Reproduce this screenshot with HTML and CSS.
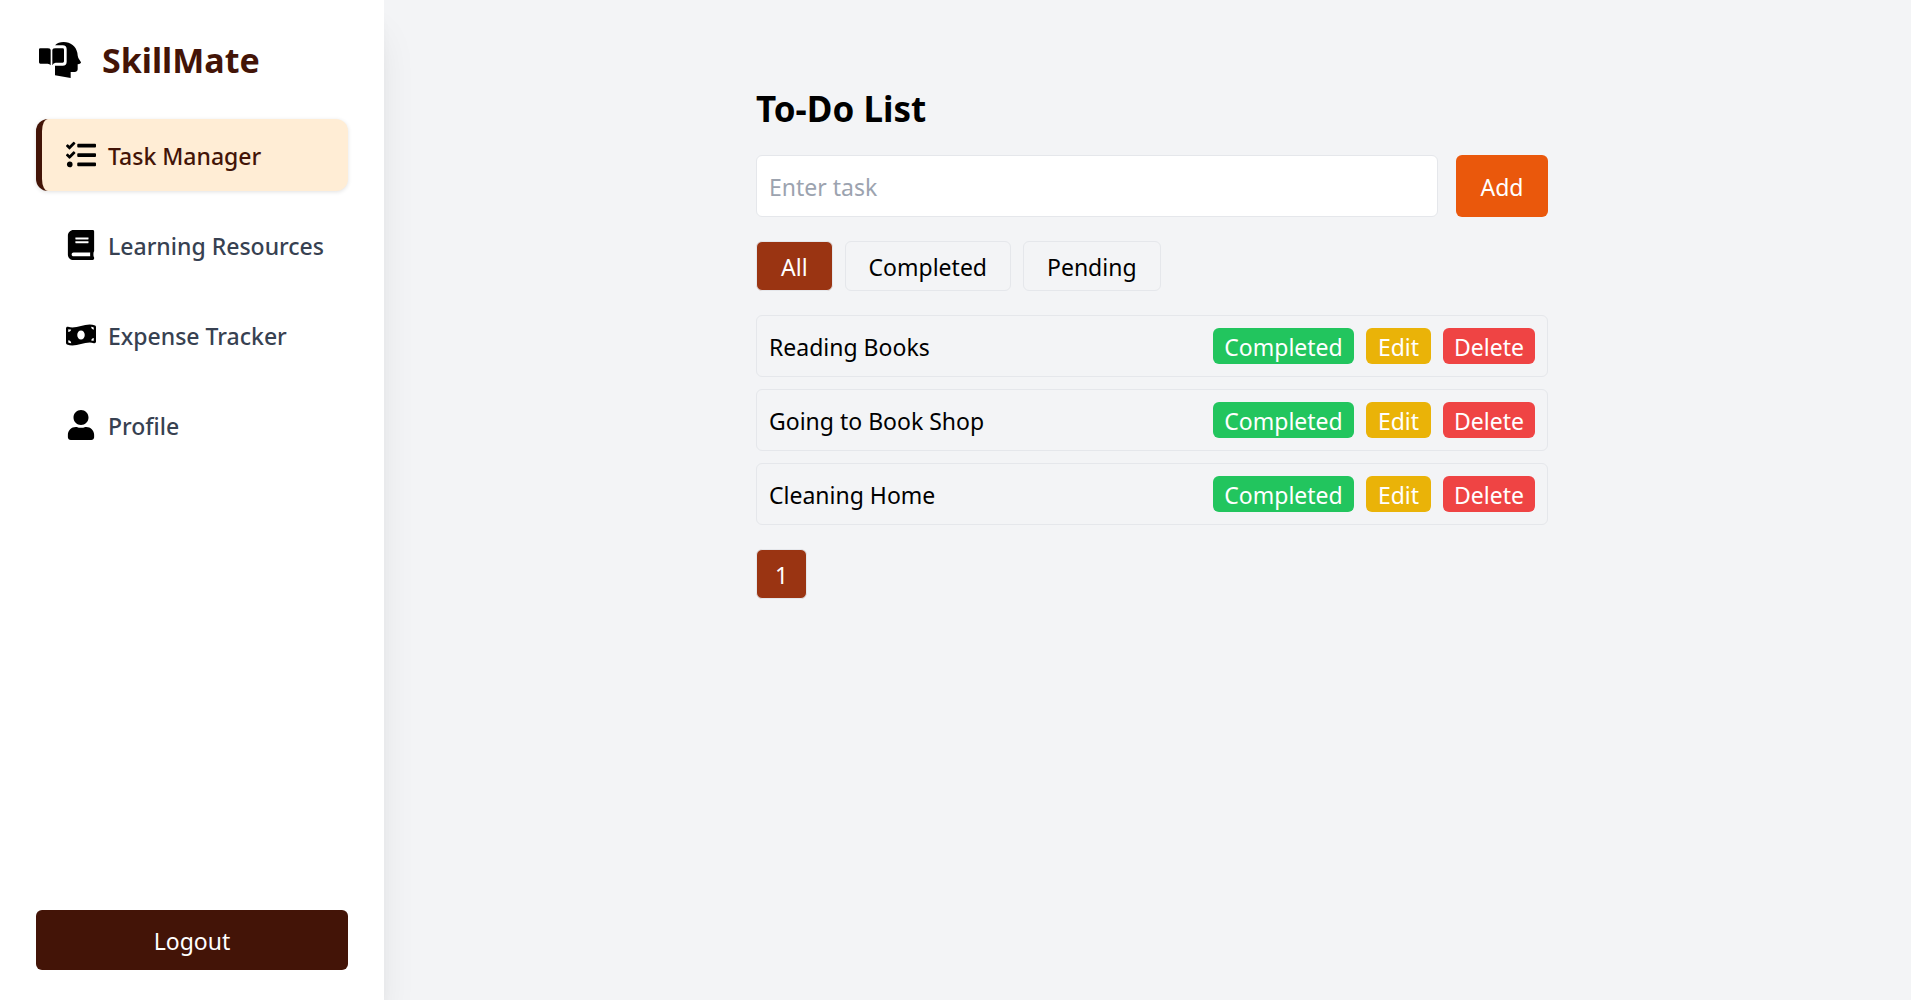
FILE: index.html
```html
<!DOCTYPE html>
<html lang="en">
<head>
  <meta charset="utf-8">
  <meta name="viewport" content="width=device-width, initial-scale=1">
  <title>SkillMate</title>
  <link rel="stylesheet" href="styles.css">
</head>
<body>
  <div class="app">
    <aside class="sidebar">
      <div class="brand">
        <svg class="brand-icon" viewBox="0 0 126 108" aria-hidden="true">
          <path d="M0 22Q0 19 4 19H26Q33 19 35 23V70Q32 65 26 65H4Q0 65 0 61Z"/>
          <path d="M40 23Q42 19 49 19H71Q75 19 75 23V58Q75 62 71 62H50Q43 62 40 70Z"/>
          <path d="M48 10Q58 0 74 0C95 0 111 13 115 32Q116 43 118 48L126 61Q126 66 116 67V82Q115 90 107 90H95V108L48 100V71H71Q83 71 83 59V22Q83 10 71 10Z"/>
        </svg>
        <span class="brand-name">SkillMate</span>
      </div>
      <nav class="nav">
        <a class="nav-link active" href="#tasks" aria-current="page">
          <svg class="nav-icon" viewBox="0 0 512 512" aria-hidden="true"><path d="M139.61 35.5a12 12 0 0 0-17 0L58.93 98.81l-22.7-22.12a12 12 0 0 0-17 0L3.53 92.41a12 12 0 0 0 0 17l47.59 47.4a12.78 12.78 0 0 0 17.61 0l15.59-15.62L156.52 69a12.09 12.09 0 0 0 .09-17zm0 159.19a12 12 0 0 0-17 0l-63.68 63.72-22.7-22.1a12 12 0 0 0-17 0L3.53 252a12 12 0 0 0 0 17L51 316.5a12.77 12.77 0 0 0 17.6 0l15.7-15.69 72.2-72.22a12 12 0 0 0 .09-16.9zM64 368c-26.49 0-48.59 21.5-48.59 48S37.53 464 64 464a48 48 0 0 0 0-96zm432 16H208a16 16 0 0 0-16 16v32a16 16 0 0 0 16 16h288a16 16 0 0 0 16-16v-32a16 16 0 0 0-16-16zm0-320H208a16 16 0 0 0-16 16v32a16 16 0 0 0 16 16h288a16 16 0 0 0 16-16V80a16 16 0 0 0-16-16zm0 160H208a16 16 0 0 0-16 16v32a16 16 0 0 0 16 16h288a16 16 0 0 0 16-16v-32a16 16 0 0 0-16-16z"/></svg>
          <span class="nav-label">Task Manager</span>
        </a>
        <a class="nav-link" href="#resources">
          <svg class="nav-icon" viewBox="0 0 448 512" aria-hidden="true"><path d="M448 360V24c0-13.3-10.7-24-24-24H96C43 0 0 43 0 96v320c0 53 43 96 96 96h328c13.3 0 24-10.7 24-24v-16c0-7.5-3.5-14.3-8.9-18.7-4.2-15.4-4.2-59.3 0-74.7 5.4-4.3 8.9-11.1 8.9-18.6zM128 134c0-3.3 2.7-6 6-6h212c3.3 0 6 2.7 6 6v20c0 3.3-2.7 6-6 6H134c-3.3 0-6-2.7-6-6v-20zm0 64c0-3.3 2.7-6 6-6h212c3.3 0 6 2.7 6 6v20c0 3.3-2.7 6-6 6H134c-3.3 0-6-2.7-6-6v-20zm253.4 250H96c-17.7 0-32-14.3-32-32 0-17.6 14.4-32 32-32h285.4c-1.9 17.1-1.9 46.9 0 64z"/></svg>
          <span class="nav-label">Learning Resources</span>
        </a>
        <a class="nav-link" href="#expenses">
          <svg class="nav-icon" viewBox="0 0 640 512" aria-hidden="true"><path d="M621.16 54.46C582.37 38.19 543.55 32 504.75 32c-123.17-.01-246.33 62.34-369.5 62.34-30.89 0-61.76-3.92-92.65-13.72-3.47-1.1-6.95-1.62-10.35-1.62C15.04 79 0 92.32 0 110.81v317.26c0 12.63 7.23 24.6 18.84 29.46C57.63 473.81 96.45 480 135.25 480c123.17 0 246.34-62.35 369.51-62.35 30.89 0 61.76 3.92 92.65 13.72 3.47 1.1 6.95 1.62 10.35 1.62 17.21 0 32.25-13.32 32.25-31.81V83.93c-.01-12.64-7.24-24.6-18.85-29.47zM48 132.22c20.12 5.04 41.12 7.57 62.72 8.93C104.84 170.54 79 192.69 48 192.69v-60.47zm0 285v-47.78c34.37 0 62.18 27.27 63.71 61.4-22.53-1.81-43.59-6.31-63.71-13.62zM320 352c-44.19 0-80-42.99-80-96 0-53.02 35.82-96 80-96s80 42.98 80 96c0 53.03-35.83 96-80 96zm272 27.78c-17.52-4.39-35.71-6.85-54.32-8.44 5.87-26.08 27.5-45.88 54.32-49.28v57.72zm0-236.11c-30.89-3.91-54.86-29.7-55.81-61.55 19.54 2.17 38.09 6.23 55.81 13.66v47.89z"/></svg>
          <span class="nav-label">Expense Tracker</span>
        </a>
        <a class="nav-link" href="#profile">
          <svg class="nav-icon" viewBox="0 0 448 512" aria-hidden="true"><path d="M224 256c70.7 0 128-57.3 128-128S294.7 0 224 0 96 57.3 96 128s57.3 128 128 128zm89.6 32h-16.7c-22.2 10.2-46.9 16-72.9 16s-50.6-5.8-72.9-16h-16.7C60.2 288 0 348.2 0 422.4V464c0 26.5 21.5 48 48 48h352c26.5 0 48-21.5 48-48v-41.6c0-74.2-60.2-134.4-134.4-134.4z"/></svg>
          <span class="nav-label">Profile</span>
        </a>
      </nav>
      <button class="logout" type="button">Logout</button>
    </aside>

    <main class="main">
      <section class="todo">
        <h1 class="title">To-Do List</h1>
        <form class="add-form">
          <input class="task-input" type="text" placeholder="Enter task" aria-label="Enter task">
          <button class="add" type="button">Add</button>
        </form>
        <div class="filters">
          <button class="chip selected" type="button">All</button>
          <button class="chip" type="button">Completed</button>
          <button class="chip" type="button">Pending</button>
        </div>
        <ul class="tasks">
          <li class="task">
            <span class="task-name">Reading Books</span>
            <button class="action complete" type="button">Completed</button>
            <button class="action edit" type="button">Edit</button>
            <button class="action delete" type="button">Delete</button>
          </li>
          <li class="task">
            <span class="task-name">Going to Book Shop</span>
            <button class="action complete" type="button">Completed</button>
            <button class="action edit" type="button">Edit</button>
            <button class="action delete" type="button">Delete</button>
          </li>
          <li class="task">
            <span class="task-name">Cleaning Home</span>
            <button class="action complete" type="button">Completed</button>
            <button class="action edit" type="button">Edit</button>
            <button class="action delete" type="button">Delete</button>
          </li>
        </ul>
        <div class="pages">
          <button class="chip page selected" type="button">1</button>
        </div>
      </section>
    </main>
  </div>
</body>
</html>
```
FILE: styles.css
```css
*,
*::before,
*::after {
  box-sizing: border-box;
}

body {
  margin: 0;
  background: #f3f4f6;
  color: #000;
  font-family: "Segoe UI", "Noto Sans", "Open Sans", sans-serif;
  font-size: 23px;
  line-height: 36px;
}

button,
input {
  margin: 0;
  font: inherit;
  color: inherit;
}

button {
  border: 0;
  border-radius: 6px;
  cursor: pointer;
}

.app {
  display: flex;
  min-height: 100vh;
}

.sidebar {
  display: flex;
  flex-direction: column;
  flex: none;
  width: 384px;
  padding: 36px 36px 30px;
  background: #fff;
  box-shadow: 0 30px 38px -8px rgba(0, 0, 0, 0.1), 0 12px 15px -9px rgba(0, 0, 0, 0.1);
}

.brand {
  display: flex;
  align-items: center;
  gap: 21px;
  padding-left: 3px;
  margin-bottom: 35px;
}

.brand-icon {
  width: 42px;
  height: 36px;
}

.brand-name {
  color: #431407;
  font-size: 34px;
  font-weight: 700;
  line-height: 48px;
}

.nav {
  display: flex;
  flex-direction: column;
  gap: 18px;
}

.nav-link {
  display: flex;
  align-items: center;
  gap: 12px;
  height: 72px;
  padding: 0 24px;
  border-left: 6px solid transparent;
  border-radius: 12px;
  color: #374151;
  font-weight: 500;
  white-space: nowrap;
  text-decoration: none;
}

.nav-link.active {
  border-left-color: #431407;
  background: #ffedd5;
  color: #431407;
  box-shadow: 0 1px 4px rgba(0, 0, 0, 0.12);
}

.nav-icon {
  flex: none;
  width: 30px;
  height: 30px;
  fill: #000;
}

.nav-label {
  padding-top: 2px;
}

.logout {
  margin-top: auto;
  padding: 13px 12px 11px;
  background: #431407;
  color: #fff;
}

.main {
  flex: 1;
  padding: 86px 24px 36px 33px;
}

.todo {
  display: flex;
  flex-direction: column;
  gap: 24px;
  max-width: 792px;
  margin: 0 auto;
}

.title {
  margin: 0;
  font-size: 35px;
  font-weight: 700;
  line-height: 45px;
}

.add-form {
  display: flex;
  gap: 18px;
}

.task-input {
  flex: 1;
  min-width: 0;
  padding: 13px 12px 11px;
  border: 1px solid #e5e7eb;
  border-radius: 6px;
  background: #fff;
}

.task-input::placeholder {
  color: #9ca3af;
  opacity: 1;
}

.add {
  width: 92px;
  padding: 13px 0 11px;
  background: #ea580c;
  color: #fff;
}

.filters,
.pages {
  display: flex;
  gap: 12px;
}

.chip {
  padding: 7px 23px 5px;
  border: 1px solid #e5e7eb;
  background: transparent;
}

.chip.selected {
  padding: 7px 24px 5px;
  background: #9a3412;
  color: #fff;
}

.chip.page {
  padding: 7px 18px 5px;
}

.tasks {
  display: flex;
  flex-direction: column;
  gap: 12px;
  margin: 0;
  padding: 0;
  list-style: none;
}

.task {
  display: flex;
  align-items: center;
  gap: 12px;
  padding: 12px;
  border: 1px solid #e5e7eb;
  border-radius: 6px;
}

.task-name {
  flex: 1;
  padding-top: 2px;
  line-height: 34px;
}

.action {
  padding: 2px 0 0;
  color: #fff;
  line-height: 34px;
}

.complete {
  width: 141px;
  background: #22c55e;
}

.edit {
  width: 65px;
  background: #eab308;
}

.delete {
  width: 92px;
  background: #ef4444;
}
```
